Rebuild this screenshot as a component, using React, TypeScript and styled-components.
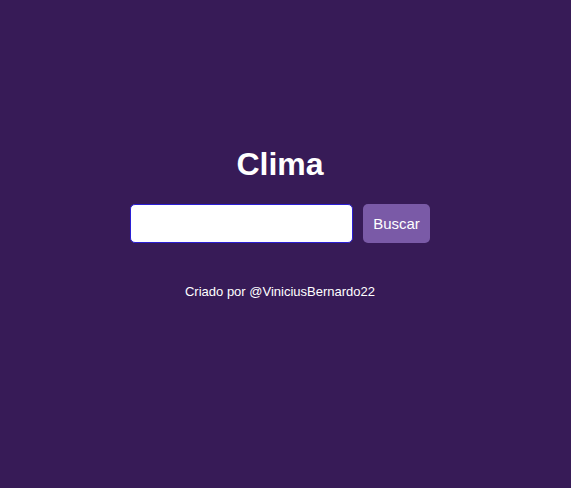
import React from "react";
import styled, { createGlobalStyle } from "styled-components";

const Global = createGlobalStyle`
  html, body { margin: 0; padding: 0; background: #371b57; }
  body { font-family: "Liberation Sans", Arial, sans-serif; }
`;

const Page = styled.main`
  min-height: 488px;
  box-sizing: border-box;
  padding: 146px 11px 0 0;
  display: flex;
  flex-direction: column;
  align-items: center;
  background: #371b57;
`;

const Title = styled.h1`
  margin: 0;
  font-size: 32px;
  line-height: 37px;
  font-weight: 700;
  color: #ffffff;
`;

const SearchRow = styled.form`
  margin-top: 21px;
  display: flex;
  gap: 10px;
`;

const Input = styled.input`
  box-sizing: border-box;
  width: 223px;
  height: 39px;
  border: 1px solid #2b1fd4;
  border-radius: 5px;
  background: #ffffff;
  outline: none;
  padding: 0 8px;
  font-size: 16px;
  font-family: inherit;
`;

const Button = styled.button`
  box-sizing: border-box;
  width: 67px;
  height: 39px;
  border: none;
  border-radius: 5px;
  background: #7a5aa7;
  color: #ffffff;
  font-family: "Liberation Sans", Arial, sans-serif;
  font-size: 15px;
  padding: 0;
  cursor: pointer;
`;

const Footer = styled.p`
  margin: 41px 0 0;
  font-size: 13px;
  line-height: 15px;
  color: #ffffff;
`;

export default function App() {
  return (
    <>
      <Global />
      <Page>
        <Title>Clima</Title>
        <SearchRow onSubmit={(e) => e.preventDefault()}>
          <Input type="text" />
          <Button type="submit">Buscar</Button>
        </SearchRow>
        <Footer>Criado por @ViniciusBernardo22</Footer>
      </Page>
    </>
  );
}
